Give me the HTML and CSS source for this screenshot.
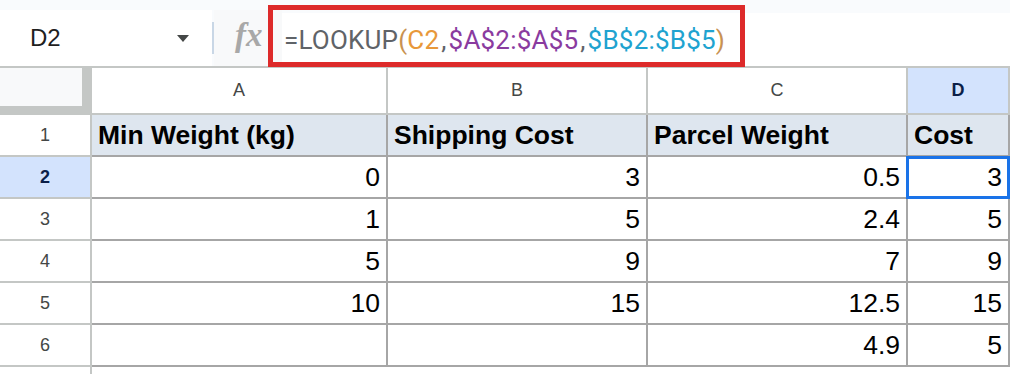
FILE: index.html
```html
<!DOCTYPE html>
<html lang="en">

<head>
    <meta charset="UTF-8">
    <title>LOOKUP example</title>
    <link rel="stylesheet" href="styles.css">
</head>

<body>

    <div class="toolbar">
        <div class="namebox">
            <span class="cellref">D2</span>
            <span class="caret"></span>
        </div>
        <div class="divider"></div>
        <div class="fx">fx</div>
        <div class="formula">
            <span class="fn">=LOOKUP</span><span class="paren">(</span><span class="ref-c">C2</span><span class="sep">,</span><span class="ref-a">$A$2:$A$5</span><span class="sep">,</span><span class="ref-b">$B$2:$B$5</span><span class="paren">)</span>
        </div>
        <div class="highlight"></div>
    </div>

    <div class="sheet">
        <div class="corner"></div>
        <div class="colhead">A</div>
        <div class="colhead">B</div>
        <div class="colhead">C</div>
        <div class="colhead active">D</div>

        <div class="rowhead">1</div>
        <div class="cell title">Min Weight (kg)</div>
        <div class="cell title">Shipping Cost</div>
        <div class="cell title">Parcel Weight</div>
        <div class="cell title">Cost</div>

        <div class="rowhead active">2</div>
        <div class="cell num">0</div>
        <div class="cell num">3</div>
        <div class="cell num">0.5</div>
        <div class="cell num selected">3</div>

        <div class="rowhead">3</div>
        <div class="cell num">1</div>
        <div class="cell num">5</div>
        <div class="cell num">2.4</div>
        <div class="cell num">5</div>

        <div class="rowhead">4</div>
        <div class="cell num">5</div>
        <div class="cell num">9</div>
        <div class="cell num">7</div>
        <div class="cell num">9</div>

        <div class="rowhead">5</div>
        <div class="cell num">10</div>
        <div class="cell num">15</div>
        <div class="cell num">12.5</div>
        <div class="cell num">15</div>

        <div class="rowhead">6</div>
        <div class="cell num"></div>
        <div class="cell num"></div>
        <div class="cell num">4.9</div>
        <div class="cell num">5</div>

        <div class="rowhead"></div>
        <div class="cell blank"></div>
        <div class="cell blank"></div>
        <div class="cell blank"></div>
        <div class="cell blank"></div>
    </div>

</body>

</html>
```

FILE: styles.css
```css
body {
    margin: 0;
    height: 100vh;
    overflow: hidden;
    background-color: #ffffff;
    font-family: "Liberation Sans", Arial, sans-serif;
}

/* formula bar */
.toolbar {
    position: relative;
    display: flex;
    height: 66px;
    background-color: #f9fbfd;
    border-bottom: 2px solid #c4c7c5;
}

.namebox {
    width: 212px;
    box-sizing: border-box;
    margin-top: 10px;
    padding: 0 23px 0 30px;
    display: flex;
    align-items: center;
    justify-content: space-between;
    background-color: #ffffff;
}

.cellref {
    font-size: 24px;
    color: #1f1f1f;
}

.caret {
    width: 0;
    height: 0;
    border-left: 6px solid transparent;
    border-right: 6px solid transparent;
    border-top: 7px solid #444746;
}

.divider {
    width: 2px;
    height: 32px;
    margin-top: 22px;
    background-color: #c9d7e6;
}

.fx {
    width: 68px;
    box-sizing: border-box;
    margin-top: 10px;
    padding: 7px 0 0 21px;
    background-color: #f8f9fa;
    font-family: "Liberation Serif", "DejaVu Serif", serif;
    font-style: italic;
    font-weight: bold;
    font-size: 33px;
    color: #a8a8a8;
}

.formula {
    flex: 1;
    margin-top: 13px;
    padding-left: 2px;
    display: flex;
    align-items: center;
    background-color: #ffffff;
    font-family: Roboto, "Liberation Sans", sans-serif;
    font-size: 26px;
    letter-spacing: 0.2px;
    color: #5f6368;
    white-space: pre;
}

.formula .paren {
    color: #c89252;
}

.formula .ref-c {
    color: #e8983a;
}

.formula .sep {
    color: #5f6368;
    padding: 0 2px;
}

.formula .ref-a {
    color: #8a3b9f;
}

.formula .ref-b {
    color: #20a3d0;
}

.highlight {
    position: absolute;
    left: 268px;
    top: 5px;
    width: 477px;
    height: 62px;
    box-sizing: border-box;
    border: 5px solid #dd2a2a;
}

/* grid */
.sheet {
    display: grid;
    grid-template-columns: 92px 296px 260px 260px 102px;
    grid-template-rows: 47px;
    grid-auto-rows: 42px;
}

.sheet > div {
    box-sizing: border-box;
    border-right: 2px solid #a6a6a6;
    border-bottom: 2px solid #a6a6a6;
}

.sheet > .corner {
    background-color: #f8f9fa;
    border-right: 10px solid #c4c7c5;
    border-bottom: 9px solid #c4c7c5;
}

.sheet > .colhead {
    display: flex;
    align-items: center;
    justify-content: center;
    font-size: 18px;
    color: #444746;
    border-right-color: #c4c7c5;
    border-bottom-color: #c4c7c5;
}

.sheet > .rowhead {
    display: flex;
    align-items: center;
    justify-content: center;
    font-size: 18px;
    color: #444746;
    border-right-color: #c4c7c5;
    border-bottom-color: #c4c7c5;
}

.sheet > .active {
    background-color: #d3e3fd;
    color: #0b1f48;
    font-weight: bold;
}

.cell {
    display: flex;
    align-items: center;
    padding: 0 6px;
    font-size: 26.5px;
    color: #000000;
}

.title {
    background-color: #dee6ef;
    font-weight: bold;
}

.num {
    justify-content: flex-end;
}

.sheet > .blank {
    border-right-color: transparent;
}

.selected {
    position: relative;
}

.selected::after {
    content: "";
    position: absolute;
    top: -1px;
    left: -2px;
    right: -2px;
    bottom: -2px;
    border: 3px solid #1a73e8;
}
```
